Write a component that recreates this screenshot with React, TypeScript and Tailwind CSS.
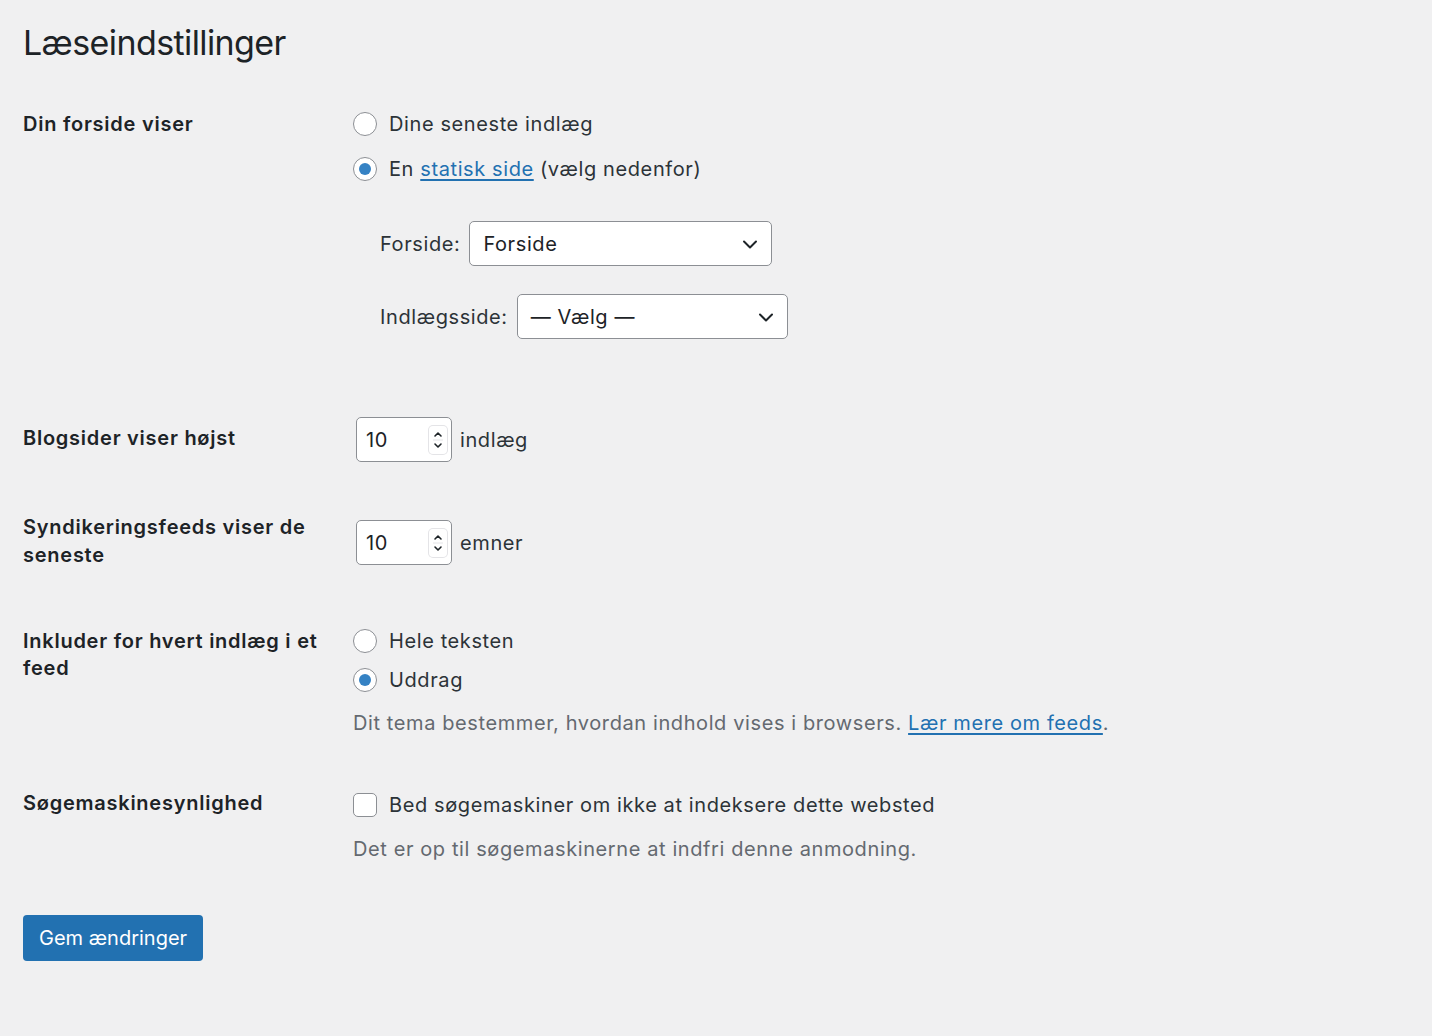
import React from "react";

const font = { fontFamily: "Inter, 'Noto Sans', sans-serif" };

function Radio({ checked }: { checked?: boolean }) {
  return (
    <span className="flex h-[24px] w-[24px] shrink-0 items-center justify-center rounded-full border-[1.5px] border-[#8c8f94] bg-white">
      {checked && <span className="h-[12px] w-[12px] rounded-full bg-[#3582c4]" />}
    </span>
  );
}

function Chevron() {
  return (
    <svg width="18" height="18" viewBox="0 0 18 18" fill="none">
      <path d="M3 6.5l6 6 6-6" stroke="#1d2327" strokeWidth="2" strokeLinecap="round" strokeLinejoin="round" />
    </svg>
  );
}

function Select({ value, width }: { value: string; width: string }) {
  return (
    <div className={`flex h-[45px] items-center justify-between rounded-[5px] border border-[#8c8f94] bg-white pl-[13px] pr-[12px] ${width}`}>
      <span className="text-[20px] tracking-[0.6px] text-[#1d2327]">{value}</span>
      <Chevron />
    </div>
  );
}

function NumberInput({ value }: { value: string }) {
  return (
    <div className="flex h-[45px] w-[96px] items-center justify-between rounded-[5px] border border-[#8c8f94] bg-white pl-[9px] pr-[4px]">
      <span className="text-[20px] text-[#1d2327]">{value}</span>
      <div className="flex h-[28px] w-[18px] flex-col items-center justify-center rounded-[4px] bg-white shadow-[0_0_0_1px_#e4e4e7]">
        <svg width="10" height="24" viewBox="0 0 10 24" fill="none">
          <path d="M2 8l3-3 3 3" stroke="#1d2327" strokeWidth="1.6" strokeLinecap="round" strokeLinejoin="round" />
          <line x1="0" y1="12" x2="10" y2="12" stroke="#e4e4e7" strokeWidth="1" />
          <path d="M2 16l3 3 3-3" stroke="#1d2327" strokeWidth="1.6" strokeLinecap="round" strokeLinejoin="round" />
        </svg>
      </div>
    </div>
  );
}

export default function App() {
  return (
    <div style={font} className="min-h-[1036px] w-full bg-[#f0f0f1] px-[23px] pt-[23px] text-[#1d2327] tracking-[0.6px]">
      <h1 className="text-[34px] leading-[40px] font-normal tracking-[-0.6px] text-[#1d2327]">Læseindstillinger</h1>

      {/* Row 1 */}
      <div className="mt-[47px] grid grid-cols-[330px_1fr]">
        <div className="text-[20px] leading-[28px] font-semibold tracking-[0.75px]">Din forside viser</div>
        <div className="flex flex-col">
          <div className="flex h-[28px] items-center gap-[12px] text-[20px] text-[#2c3338]">
            <Radio />
            <span>Dine seneste indlæg</span>
          </div>
          <div className="mt-[17px] flex h-[28px] items-center gap-[12px] text-[20px] text-[#2c3338]">
            <Radio checked />
            <span>
              En <span className="text-[#2271b1] underline underline-offset-[3px]">statisk side</span> (vælg nedenfor)
            </span>
          </div>
          <div className="mt-[38px] flex items-center gap-[9px] pl-[27px]">
            <span className="text-[20px] text-[#2c3338]">Forside:</span>
            <Select value="Forside" width="w-[303px]" />
          </div>
          <div className="mt-[28px] flex items-center gap-[9px] pl-[27px]">
            <span className="text-[20px] text-[#2c3338]">Indlægsside:</span>
            <Select value="— Vælg —" width="w-[271px]" />
          </div>
        </div>
      </div>

      {/* Row 2 */}
      <div className="mt-[78px] grid grid-cols-[330px_1fr]">
        <div className="mt-[7px] text-[20px] leading-[28px] font-semibold tracking-[0.75px]">Blogsider viser højst</div>
        <div className="flex items-center gap-[8px] pl-[3px]">
          <NumberInput value="10" />
          <span className="text-[20px] text-[#2c3338]">indlæg</span>
        </div>
      </div>

      {/* Row 3 */}
      <div className="mt-[51px] grid grid-cols-[330px_1fr]">
        <div className="text-[20px] leading-[28px] font-semibold tracking-[0.75px]">
          Syndikeringsfeeds viser de
          <br />
          seneste
        </div>
        <div className="mt-[3px] flex items-center gap-[8px] pl-[3px]">
          <NumberInput value="10" />
          <span className="text-[20px] text-[#2c3338]">emner</span>
        </div>
      </div>

      {/* Row 4 */}
      <div className="mt-[58px] grid grid-cols-[330px_1fr]">
        <div className="mt-[1px] text-[20px] leading-[27px] font-semibold tracking-[0.75px]">
          Inkluder for hvert indlæg i et
          <br />
          feed
        </div>
        <div className="flex flex-col">
          <div className="flex h-[28px] items-center gap-[12px] text-[20px] text-[#2c3338]">
            <Radio />
            <span>Hele teksten</span>
          </div>
          <div className="mt-[11px] flex h-[28px] items-center gap-[12px] text-[20px] text-[#2c3338]">
            <Radio checked />
            <span>Uddrag</span>
          </div>
          <div className="mt-[15px] text-[20px] leading-[28px] text-[#646970]">
            Dit tema bestemmer, hvordan indhold vises i browsers.{" "}
            <span className="text-[#2271b1] underline underline-offset-[3px]">Lær mere om feeds</span>.
          </div>
        </div>
      </div>

      {/* Row 5 */}
      <div className="mt-[52px] grid grid-cols-[330px_1fr]">
        <div className="text-[20px] leading-[28px] font-semibold tracking-[0.75px]">Søgemaskinesynlighed</div>
        <div className="flex flex-col">
          <div className="mt-[2px] flex h-[28px] items-center gap-[12px] text-[20px] text-[#2c3338]">
            <span className="h-[24px] w-[24px] shrink-0 rounded-[5px] border-[1.5px] border-[#8c8f94] bg-white" />
            <span>Bed søgemaskiner om ikke at indeksere dette websted</span>
          </div>
          <div className="mt-[16px] text-[20px] leading-[28px] text-[#646970]">
            Det er op til søgemaskinerne at indfri denne anmodning.
          </div>
        </div>
      </div>

      <button className="mt-[52px] h-[46px] rounded-[4px] bg-[#2271b1] px-[16px] text-[20px] tracking-[0px] text-white">
        Gem ændringer
      </button>
    </div>
  );
}
